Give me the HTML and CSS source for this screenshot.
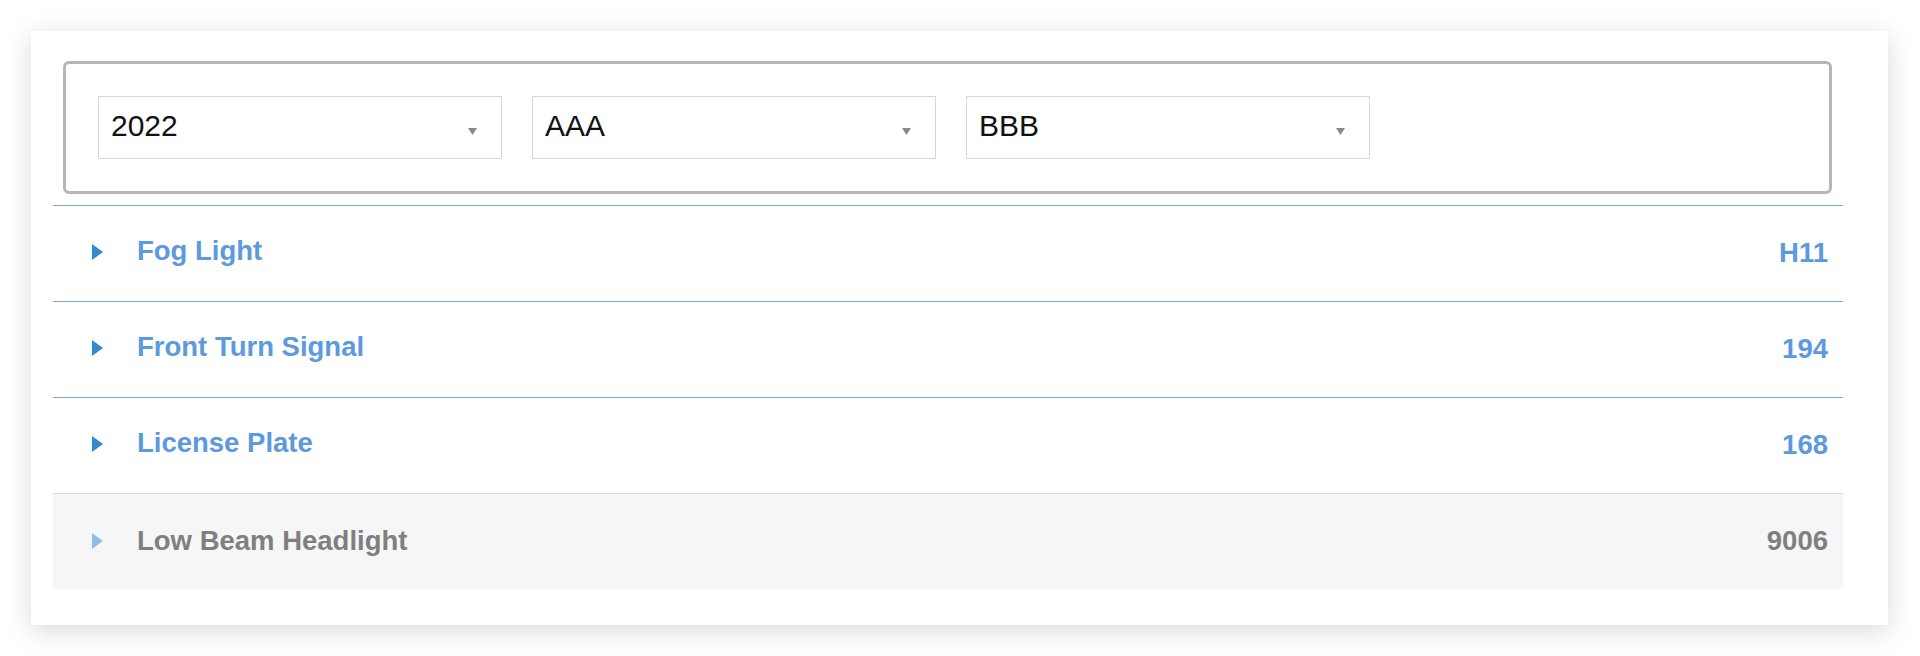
FILE: index.html
```html
<!DOCTYPE html>
<html lang="en">
<head>
    <meta charset="UTF-8">
    <meta name="viewport" content="width=device-width, initial-scale=1.0">
    <title>Bulb Finder</title>
    <link rel="stylesheet" href="styles.css">
</head>
<body>
    <div class="card">
        <div class="filters">
            <div class="select">
                <span>2022</span>
                <svg class="caret" width="9" height="7" viewBox="0 0 9 7"><path d="M0 0H9L4.5 7Z"/></svg>
            </div>
            <div class="select">
                <span>AAA</span>
                <svg class="caret" width="9" height="7" viewBox="0 0 9 7"><path d="M0 0H9L4.5 7Z"/></svg>
            </div>
            <div class="select">
                <span>BBB</span>
                <svg class="caret" width="9" height="7" viewBox="0 0 9 7"><path d="M0 0H9L4.5 7Z"/></svg>
            </div>
        </div>

        <div class="bulbs">
            <div class="row">
                <svg class="arrow" width="11" height="16" viewBox="0 0 11 16"><path d="M0 0L11 8L0 16Z"/></svg>
                <span class="label">Fog Light</span>
                <span class="value">H11</span>
            </div>
            <div class="row">
                <svg class="arrow" width="11" height="16" viewBox="0 0 11 16"><path d="M0 0L11 8L0 16Z"/></svg>
                <span class="label">Front Turn Signal</span>
                <span class="value">194</span>
            </div>
            <div class="row">
                <svg class="arrow" width="11" height="16" viewBox="0 0 11 16"><path d="M0 0L11 8L0 16Z"/></svg>
                <span class="label">License Plate</span>
                <span class="value">168</span>
            </div>
            <div class="row muted">
                <svg class="arrow" width="11" height="16" viewBox="0 0 11 16"><path d="M0 0L11 8L0 16Z"/></svg>
                <span class="label">Low Beam Headlight</span>
                <span class="value">9006</span>
            </div>
        </div>
    </div>
</body>
</html>
```

FILE: styles.css
```css
* {
    box-sizing: border-box;
    margin: 0;
    padding: 0;
    font-family: 'Liberation Sans', Arial, sans-serif;
}
body {
    background: #ffffff;
    padding: 31px 32px 31px 31px;
    min-height: 656px;
}
.card {
    background: white;
    height: 594px;
    padding: 30px 45px 37px 22px;
    box-shadow: 0 6px 26px rgba(0, 0, 0, 0.15);
}
.filters {
    display: flex;
    gap: 30px;
    margin: 0 11px 0 10px;
    padding: 32px;
    height: 133px;
    border: 3px solid #b6b6b6;
    border-radius: 6px;
}
.select {
    width: 404px;
    height: 63px;
    display: flex;
    align-items: center;
    justify-content: space-between;
    padding: 0 24px 0 12px;
    border: 1px solid #d6d6d6;
    font-size: 30px;
    color: #111;
}
.select span {
    margin-top: -4px;
}
.caret {
    fill: #8a8a8a;
    margin-top: 8px;
}
.bulbs {
    margin-top: 11px;
}
.row {
    display: flex;
    align-items: center;
    height: 96px;
    padding: 0 15px 0 39px;
    border-top: 1px solid #80a8cc;
    font-size: 27.5px;
    font-weight: bold;
    color: #5c99de;
}
.arrow {
    fill: #2f8bd3;
    margin-top: -4px;
}
.label {
    margin-left: 34px;
    flex: 1;
    margin-top: -5px;
}
.value {
    margin-top: -1px;
}
.row.muted {
    background: #f6f6f6;
    border-top-color: #dddddd;
    color: #7f7f7f;
}
.row.muted .arrow {
    fill: #8dbee4;
    margin-top: -2px;
}
.row.muted .label {
    margin-top: -1px;
}
```
